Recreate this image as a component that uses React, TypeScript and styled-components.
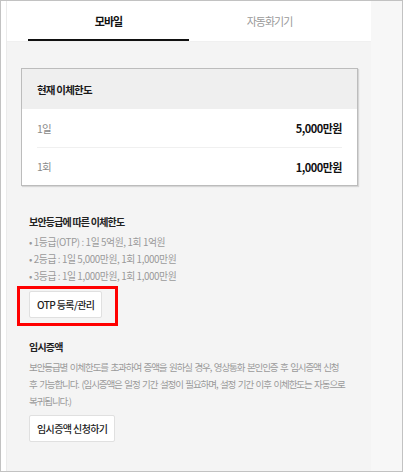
import React from 'react';
import styled, { createGlobalStyle } from 'styled-components';

const GlobalStyle = createGlobalStyle`
  html, body {
    margin: 0;
    padding: 0;
    background: #ffffff;
  }
  * {
    box-sizing: border-box;
  }
  body {
    font-family: "Noto Sans CJK KR", "Noto Sans", sans-serif;
  }
`;

const Frame = styled.div`
  width: 403px;
  height: 472px;
  border: 1px solid #c2c2c2;
  background: #ffffff;
  padding-left: 5px;
  display: flex;
  overflow: hidden;
`;

const Main = styled.div`
  width: 365px;
  background: #f4f4f4;
  border-left: 1px solid #ebebeb;
  display: flex;
  flex-direction: column;
`;

const Side = styled.div`
  flex: 1;
  background: #f7f7f7;
`;

const TabBar = styled.div`
  height: 41px;
  background: #ffffff;
  display: flex;
  padding: 0 21px;
  border-bottom: 1px solid #f0f0f0;
`;

const Tab = styled.div<{ $active?: boolean }>`
  flex: 1;
  display: flex;
  align-items: center;
  justify-content: center;
  font-size: 11px;
  letter-spacing: -1px;
  font-weight: ${({ $active }) => ($active ? 700 : 400)};
  color: ${({ $active }) => ($active ? '#111111' : '#9a9a9a')};
  border-bottom: 2px solid ${({ $active }) => ($active ? '#111111' : 'transparent')};
  padding-top: 1px;
`;

const Content = styled.div`
  padding: 26px 13px 0 14px;
`;

const Card = styled.div`
  border: 1px solid #bcbcbc;
  background: #ffffff;
  box-shadow: 1px 1px 1px rgba(0, 0, 0, 0.12);
`;

const CardHeader = styled.div`
  height: 40px;
  background: #efefef;
  display: flex;
  align-items: center;
  padding: 0 15px;
  font-size: 10.5px;
  letter-spacing: -0.8px;
  font-weight: 700;
  color: #1a1a1a;
`;

const Row = styled.div`
  height: 38px;
  margin: 0 15px;
  display: flex;
  align-items: center;
  justify-content: space-between;
  & + & {
    border-top: 1px solid #f0f0f0;
  }
`;

const RowLabel = styled.span`
  font-size: 10.5px;
  letter-spacing: -0.8px;
  color: #8a8a8a;
`;

const RowValue = styled.span`
  font-size: 11px;
  letter-spacing: -0.5px;
  font-weight: 700;
  color: #111111;
`;

const Section = styled.section<{ $top: number }>`
  padding: 0 22px;
  margin-top: ${({ $top }) => $top}px;
`;

const SectionTitle = styled.h3`
  margin: 0 0 4px;
  font-size: 10px;
  line-height: 17px;
  letter-spacing: -0.8px;
  font-weight: 700;
  color: #222222;
`;

const BulletList = styled.ul`
  list-style: none;
  margin: 0;
  padding: 0;
`;

const Bullet = styled.li`
  font-size: 9.8px;
  line-height: 17.2px;
  letter-spacing: -0.4px;
  color: #9a9a9a;
  &::before {
    content: '• ';
  }
`;

const Paragraph = styled.p`
  margin: 0;
  font-size: 9.5px;
  line-height: 17px;
  letter-spacing: -1.1px;
  word-spacing: 1.5px;
  color: #9a9a9a;
  white-space: nowrap;
`;

const Highlight = styled.div`
  position: relative;
  display: inline-block;
  margin-top: 5px;
  &::after {
    content: '';
    position: absolute;
    top: -5px;
    left: -12px;
    right: -16px;
    bottom: -8px;
    border: 3px solid #ff0000;
    pointer-events: none;
  }
`;

const Button = styled.button<{ $top?: number }>`
  display: block;
  height: 27px;
  margin-top: ${({ $top }) => $top ?? 0}px;
  padding: 0 7px;
  background: #ffffff;
  border: 1px solid #e0e0e0;
  border-radius: 2px;
  font-family: "Noto Sans CJK KR", "Noto Sans", sans-serif;
  font-size: 10px;
  font-weight: 500;
  letter-spacing: -0.6px;
  color: #222222;
`;

export default function App() {
  return (
    <>
      <GlobalStyle />
      <Frame>
        <Main>
          <TabBar>
            <Tab $active>모바일</Tab>
            <Tab>자동화기기</Tab>
          </TabBar>
          <Content>
            <Card>
              <CardHeader>현재 이체한도</CardHeader>
              <Row>
                <RowLabel>1일</RowLabel>
                <RowValue>5,000만원</RowValue>
              </Row>
              <Row>
                <RowLabel>1회</RowLabel>
                <RowValue>1,000만원</RowValue>
              </Row>
            </Card>
          </Content>
          <Section $top={27}>
            <SectionTitle>보안등급에 따른 이체한도</SectionTitle>
            <BulletList>
              <Bullet>1등급(OTP) : 1일 5억원, 1회 1억원</Bullet>
              <Bullet>2등급 : 1일 5,000만원, 1회 1,000만원</Bullet>
              <Bullet>3등급 : 1일 1,000만원, 1회 1,000만원</Bullet>
            </BulletList>
            <Highlight>
              <Button>OTP 등록/관리</Button>
            </Highlight>
          </Section>
          <Section $top={20}>
            <SectionTitle>임시증액</SectionTitle>
            <Paragraph>
              보안등급별 이체한도를 초과하여 증액을 원하실 경우, 영상통화 본인인증 후 임시증액 신청
              <br />
              후 가능합니다. (임시증액은 일정 기간 설정이 필요하며, 설정 기간 이후 이체한도는 자동으로
              <br />
              복귀됩니다.)
            </Paragraph>
            <Button $top={5}>임시증액 신청하기</Button>
          </Section>
        </Main>
        <Side />
      </Frame>
    </>
  );
}
